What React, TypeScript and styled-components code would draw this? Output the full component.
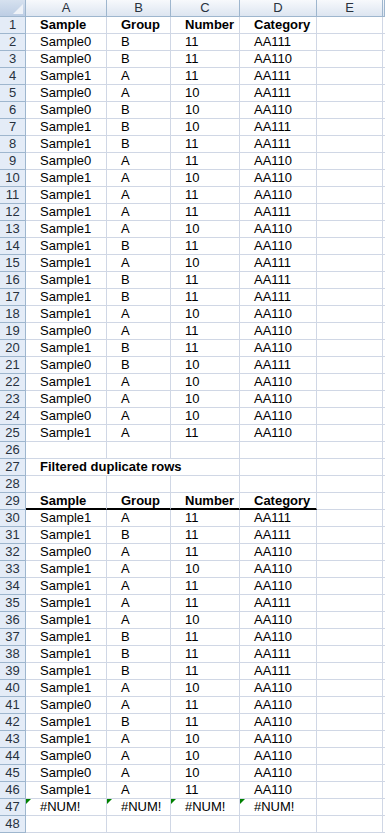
import React from 'react';
import styled, { createGlobalStyle, css } from 'styled-components';

const GlobalStyle = createGlobalStyle`
  html, body {
    margin: 0;
    padding: 0;
    background: #ffffff;
  }
  body {
    font-family: "Liberation Sans", Arial, sans-serif;
    font-size: 13px;
    color: #000;
    overflow: hidden;
  }
`;

const COLS = '26px 81px 64px 69px 77px 66px 1fr';
const GRID = '#d0d7e5';
const HEAD_LINE = '#9eb6ce';

const Sheet = styled.div`
  width: 385px;
  height: 834px;
  overflow: hidden;
  background: #fff;
`;

const Row = styled.div`
  display: grid;
  grid-template-columns: ${COLS};
  height: 17px;
`;

const HeaderRow = styled(Row)`
  background: linear-gradient(#f7f9fc, #dbe4f0);
`;

const Corner = styled.div`
  position: relative;
  box-sizing: border-box;
  background: linear-gradient(#d6e1ef, #bccde4);
  border-right: 1px solid ${HEAD_LINE};
  border-bottom: 1px solid ${HEAD_LINE};

  &::after {
    content: '';
    position: absolute;
    right: 2px;
    bottom: 2px;
    width: 0;
    height: 0;
    border-left: 10px solid transparent;
    border-bottom: 10px solid #eef2f8;
  }
`;

const ColHead = styled.div`
  box-sizing: border-box;
  border-right: 1px solid ${HEAD_LINE};
  border-bottom: 1px solid ${HEAD_LINE};
  display: flex;
  align-items: center;
  justify-content: center;
  color: #28323e;
  font-size: 13px;
  line-height: 16px;
`;

const RowHead = styled.div`
  box-sizing: border-box;
  background: #e4ecf7;
  border-right: 1px solid ${HEAD_LINE};
  border-bottom: 1px solid ${HEAD_LINE};
  display: flex;
  align-items: center;
  justify-content: center;
  color: #28323e;
  font-size: 13px;
  line-height: 16px;
`;

const Cell = styled.div<{ $bold?: boolean; $underline?: boolean; $span?: number; $flag?: boolean }>`
  position: relative;
  box-sizing: border-box;
  border-right: 1px solid ${GRID};
  border-bottom: 1px solid ${GRID};
  padding-left: 14px;
  line-height: 16px;
  white-space: nowrap;
  overflow: visible;
  font-weight: ${({ $bold }) => ($bold ? 700 : 400)};
  ${({ $span }) =>
    $span &&
    css`
      grid-column: span ${$span};
    `}
  ${({ $underline }) =>
    $underline &&
    css`
      border-bottom: 2px solid #000;
      line-height: 15px;
    `}
  ${({ $flag }) =>
    $flag &&
    css`
      &::before {
        content: '';
        position: absolute;
        left: 0;
        top: 0;
        width: 0;
        height: 0;
        border-top: 5px solid #008000;
        border-right: 5px solid transparent;
      }
    `}
`;

type Rec = [string, string, string, string];

const first: Rec[] = [
  ['Sample0', 'B', '11', 'AA111'],
  ['Sample0', 'B', '11', 'AA110'],
  ['Sample1', 'A', '11', 'AA111'],
  ['Sample0', 'A', '10', 'AA111'],
  ['Sample0', 'B', '10', 'AA110'],
  ['Sample1', 'B', '10', 'AA111'],
  ['Sample1', 'B', '11', 'AA111'],
  ['Sample0', 'A', '11', 'AA110'],
  ['Sample1', 'A', '10', 'AA110'],
  ['Sample1', 'A', '11', 'AA110'],
  ['Sample1', 'A', '11', 'AA111'],
  ['Sample1', 'A', '10', 'AA110'],
  ['Sample1', 'B', '11', 'AA110'],
  ['Sample1', 'A', '10', 'AA111'],
  ['Sample1', 'B', '11', 'AA111'],
  ['Sample1', 'B', '11', 'AA111'],
  ['Sample1', 'A', '10', 'AA110'],
  ['Sample0', 'A', '11', 'AA110'],
  ['Sample1', 'B', '11', 'AA110'],
  ['Sample0', 'B', '10', 'AA111'],
  ['Sample1', 'A', '10', 'AA110'],
  ['Sample0', 'A', '10', 'AA110'],
  ['Sample0', 'A', '10', 'AA110'],
  ['Sample1', 'A', '11', 'AA110'],
];

const filtered: Rec[] = [
  ['Sample1', 'A', '11', 'AA111'],
  ['Sample1', 'B', '11', 'AA111'],
  ['Sample0', 'A', '11', 'AA110'],
  ['Sample1', 'A', '10', 'AA110'],
  ['Sample1', 'A', '11', 'AA110'],
  ['Sample1', 'A', '11', 'AA111'],
  ['Sample1', 'A', '10', 'AA110'],
  ['Sample1', 'B', '11', 'AA110'],
  ['Sample1', 'B', '11', 'AA111'],
  ['Sample1', 'B', '11', 'AA111'],
  ['Sample1', 'A', '10', 'AA110'],
  ['Sample0', 'A', '11', 'AA110'],
  ['Sample1', 'B', '11', 'AA110'],
  ['Sample1', 'A', '10', 'AA110'],
  ['Sample0', 'A', '10', 'AA110'],
  ['Sample0', 'A', '10', 'AA110'],
  ['Sample1', 'A', '11', 'AA110'],
];

const headers: Rec = ['Sample', 'Group', 'Number', 'Category'];

const DataRow: React.FC<{ n: number; values?: Rec; bold?: boolean; underline?: boolean; flag?: boolean }> = ({
  n,
  values = ['', '', '', ''],
  bold,
  underline,
  flag,
}) => (
  <Row>
    <RowHead>{n}</RowHead>
    {values.map((v, i) => (
      <Cell key={i} $bold={bold} $underline={underline} $flag={flag}>
        {v}
      </Cell>
    ))}
    <Cell />
    <Cell />
  </Row>
);

const TitleRow: React.FC<{ n: number; title: string }> = ({ n, title }) => (
  <Row>
    <RowHead>{n}</RowHead>
    <Cell $bold $span={3}>
      {title}
    </Cell>
    <Cell />
    <Cell />
    <Cell />
  </Row>
);

export default function App() {
  return (
    <Sheet>
      <GlobalStyle />
      <HeaderRow>
        <Corner />
        {['A', 'B', 'C', 'D', 'E', ''].map((c, i) => (
          <ColHead key={i}>{c}</ColHead>
        ))}
      </HeaderRow>
      <DataRow n={1} values={headers} bold />
      {first.map((r, i) => (
        <DataRow key={i} n={i + 2} values={r} />
      ))}
      <DataRow n={26} />
      <TitleRow n={27} title="Filtered duplicate rows" />
      <DataRow n={28} />
      <DataRow n={29} values={headers} bold underline />
      {filtered.map((r, i) => (
        <DataRow key={i} n={i + 30} values={r} />
      ))}
      <DataRow n={47} values={['#NUM!', '#NUM!', '#NUM!', '#NUM!']} flag />
      <DataRow n={48} />
    </Sheet>
  );
}
